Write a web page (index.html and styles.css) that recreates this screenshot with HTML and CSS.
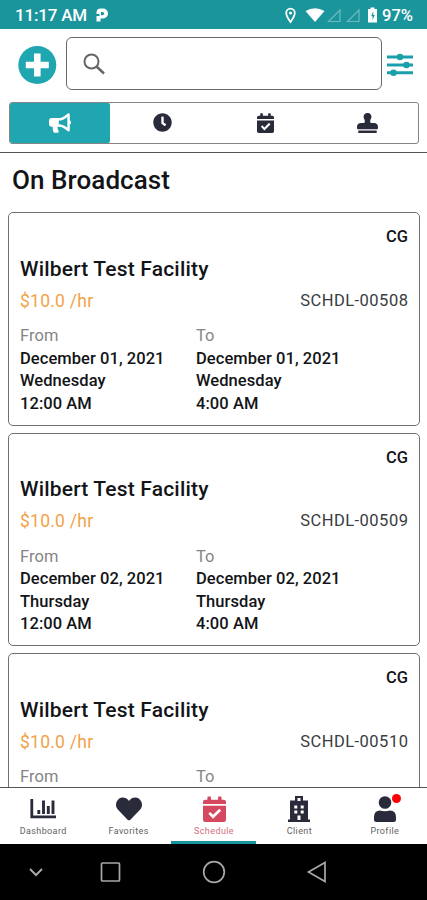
FILE: index.html
```
<!DOCTYPE html>
<html lang="en">
<head>
<meta charset="utf-8">
<title>Schedule</title>
<link rel="stylesheet" href="styles.css">
</head>
<body>
<div class="status">
  <span class="clock">11:17 AM</span>
  <svg class="parking" width="14" height="16" viewBox="0 0 14 16"><path fill="currentColor" fill-rule="evenodd" d="M1.500 7V5.500Q1.500 1.500 6 1.500H8A5 5 0 0 1 8 11.500H5.500V14.500H1.500V9H4.500V7zM6 5v3.200h1.600a1.600 1.600 0 0 0 0-3.200z"/></svg>
  <svg class="signals" width="95" height="20" viewBox="0 0 95 20">
    <path d="M6.500 17C4 13.500 2.200 11 2.200 8a4.300 4.300 0 0 1 8.600 0c0 3-1.800 5.500-4.300 9z" fill="none" stroke="#fff" stroke-width="1.800"/><circle cx="6.500" cy="8" r="1.500" fill="#fff"/>
    <path d="M21.500 6Q31 .5 40.500 6L31 17z" fill="#fff"/>
    <path d="M44.500 16.500H56V5zM63.500 16.500H75V5z" fill="none" stroke="#6fb9be" stroke-width="1.200"/>
    <path d="M86.500 2.500h4V4h2.500v13.500h-9V4h2.500z" fill="#fff"/><path d="M89.300 6.500v3.500h1.500l-2.200 5v-3.800h-1.500z" fill="#1b959c"/>
  </svg>
  <span class="percent">97%</span>
</div>
<header>
  <div class="toolbar">
    <svg class="add" width="40" height="40" viewBox="0 0 40 40"><circle cx="20.300" cy="21" r="19" fill="#1fa6b0"/><path d="M20.300 9.500v23M8.800 21h23" stroke="#fff" stroke-width="6.600"/></svg>
    <div class="search"><svg width="24" height="24" viewBox="0 0 24 24" fill="none" stroke="#666"><circle cx="8.500" cy="8.500" r="7" stroke-width="2"/><path d="M13.500 13.500l7.500 7" stroke-width="2.500"/></svg></div>
    <svg class="filters" width="26" height="24" viewBox="0 0 26 24"><path d="M0 4h26M0 12h26M0 19.700h26" stroke="#1ba0aa" stroke-width="3"/><g fill="#1ba0aa"><circle cx="13" cy="4" r="3.300"/><circle cx="19.500" cy="12" r="3.300"/><circle cx="6.500" cy="19.700" r="3.300"/></g></svg>
  </div>
  <nav class="tabs">
    <div class="tab active"><svg width="22" height="20" viewBox="0 0 576 512"><path fill="currentColor" d="M576 240c0-23.630-12.950-44.040-32-55.120V32.010C544 23.260 537.020 0 512 0c-7.120 0-14.190 2.380-19.980 7.020l-85.030 68.030C364.280 109.190 310.660 128 256 128H64c-35.350 0-64 28.650-64 64v96c0 35.350 28.650 64 64 64h33.700c-1.390 10.480-2.180 21.140-2.180 32 0 39.770 9.260 77.350 25.560 110.940 5.190 10.690 16.520 17.060 28.400 17.060h74.280c26.050 0 41.690-29.840 25.900-50.560-16.400-21.520-26.150-48.360-26.150-77.440 0-11.110 1.620-21.790 4.410-32H256c54.660 0 108.280 18.810 150.980 52.950l85.030 68.030a32.023 32.023 0 0 0 19.980 7.020c24.920 0 32-22.780 32-32V295.130C563.050 284.040 576 263.630 576 240zm-96 141.420l-33.050-26.440C392.950 311.780 325.120 288 256 288v-96c69.120 0 136.950-23.780 190.950-66.980L480 98.580v282.840z"/></svg></div>
    <div class="tab"><svg width="19" height="19" viewBox="0 0 512 512"><path fill="currentColor" d="M256,8C119,8,8,119,8,256S119,504,256,504,504,393,504,256,393,8,256,8Zm92.490,313h0l-20,25a16,16,0,0,1-22.490,2.500h0l-67-49.720a40,40,0,0,1-15-31.230V112a16,16,0,0,1,16-16h32a16,16,0,0,1,16,16V256l58,42.500A16,16,0,0,1,348.490,321Z"/></svg></div>
    <div class="tab"><svg width="17" height="20" viewBox="0 0 26 28" preserveAspectRatio="none"><path id="cal" fill="currentColor" fill-rule="evenodd" d="M5 1.500A1 1 0 0 1 6 .5h2a1 1 0 0 1 1 1V4h8V1.500a1 1 0 0 1 1-1h2a1 1 0 0 1 1 1V4h2.500A2.500 2.500 0 0 1 26 6.500V8.500H0V6.500A2.500 2.500 0 0 1 2.500 4H5zM0 10.500h26v15a2.500 2.500 0 0 1-2.500 2.500h-21A2.500 2.500 0 0 1 0 25.500zM6 19.200l5.300 5.300L20.500 16l-2-2.200-7.200 6.500-3.200-3.200z"/></svg></div>
    <div class="tab"><svg width="21" height="20" viewBox="0 0 512 512" preserveAspectRatio="none"><path fill="currentColor" d="M32 512h448v-64H32v64zm384-256h-66.560c-16.260 0-29.440-13.180-29.440-29.440v-9.460c0-27.370 8.880-53.410 21.460-77.720 9.110-17.610 12.900-38.390 9.050-60.420-6.770-38.780-38.470-70.700-77.260-77.450C212.620-9.040 160 37.330 160 96c0 14.160 3.120 27.540 8.690 39.580C182.020 164.430 192 194.700 192 226.490v.07c0 16.260-13.180 29.440-29.440 29.440H96c-53.020 0-96 42.980-96 96v32c0 17.670 14.330 32 32 32h448c17.670 0 32-14.330 32-32v-32c0-53.020-42.980-96-96-96z"/></svg></div>
  </nav>
</header>
<main>
  <h1>On Broadcast</h1>
  <article class="card">
    <div class="type">CG</div>
    <h2>Wilbert Test Facility</h2>
    <div class="meta"><span class="rate">$10.0 /hr</span><span class="code">SCHDL-00508</span></div>
    <div class="times">
      <div><p class="label">From</p><p class="date">December 01, 2021</p><p>Wednesday</p><p class="hour">12:00 AM</p></div>
      <div><p class="label">To</p><p class="date">December 01, 2021</p><p>Wednesday</p><p class="hour">4:00 AM</p></div>
    </div>
  </article>
  <article class="card">
    <div class="type">CG</div>
    <h2>Wilbert Test Facility</h2>
    <div class="meta"><span class="rate">$10.0 /hr</span><span class="code">SCHDL-00509</span></div>
    <div class="times">
      <div><p class="label">From</p><p class="date">December 02, 2021</p><p>Thursday</p><p class="hour">12:00 AM</p></div>
      <div><p class="label">To</p><p class="date">December 02, 2021</p><p>Thursday</p><p class="hour">4:00 AM</p></div>
    </div>
  </article>
  <article class="card">
    <div class="type">CG</div>
    <h2>Wilbert Test Facility</h2>
    <div class="meta"><span class="rate">$10.0 /hr</span><span class="code">SCHDL-00510</span></div>
    <div class="times">
      <div><p class="label">From</p></div>
      <div><p class="label">To</p></div>
    </div>
  </article>
</main>
<nav class="bottom">
  <div class="item"><svg width="26" height="26" viewBox="0 0 26 26"><path d="M1.800 3v17.800H26" fill="none" stroke="currentColor" stroke-width="2.800"/><path d="M8.800 18v-4M13.500 18V4.500M18.300 18v-8M23 18V4.500" stroke="currentColor" stroke-width="2.900"/></svg><span>Dashboard</span></div>
  <div class="item"><svg width="26" height="26" viewBox="0 0 512 512"><path fill="currentColor" d="M462.300 62.600C407.500 15.900 326 24.300 275.700 76.200L256 96.500l-19.700-20.300C186.100 24.300 104.500 15.900 49.700 62.600c-62.800 53.600-66.100 149.800-9.900 207.900l193.500 199.800c12.500 12.900 32.800 12.900 45.300 0l193.500-199.800c56.300-58.100 53-154.300-9.800-207.900z"/></svg><span>Favorites</span></div>
  <div class="item current"><svg width="23" height="26" viewBox="0 0 26 28" preserveAspectRatio="none"><use href="#cal"/></svg><span>Schedule</span></div>
  <div class="item"><svg width="22" height="26" viewBox="0 0 22 26"><path fill="currentColor" fill-rule="evenodd" d="M7 0h8v4.500h5v19h2V26H0v-2.500h2v-19h5zM9.500 2v3h3V2zM6.300 9.500v3h3v-3zM12.700 9.500v3h3v-3zM6.300 14.500v3h3v-3zM12.700 14.500v3h3v-3zM9.500 19.500v4.500h3v-4.500z"/></svg><span>Client</span></div>
  <div class="item"><div class="avatar"><svg width="24" height="26" viewBox="0 0 24 26" fill="currentColor"><circle cx="12" cy="6.500" r="6.300"/><path d="M1 23.500V21Q1 14.500 7 14.500q5 1.500 10 0 6 0 6 6.500v2.500Q23 26 20.500 26h-17Q1 26 1 23.500z"/></svg><i class="badge"></i></div><span>Profile</span></div>
</nav>
<div class="system">
  <svg width="427" height="56" viewBox="0 0 427 56" fill="none" stroke="#a8a8a8" stroke-width="1.700"><path d="M30 25l6 6 6-6" stroke-width="2"/><rect x="101.500" y="19" width="18" height="18" rx="1"/><circle cx="214" cy="28" r="10.300"/><path d="M308.500 28L325 18.500v19z"/></svg>
</div>
</body>
</html>
```
FILE: styles.css
```
* { box-sizing: border-box; }
body {
  margin: 0;
  width: 427px;
  height: 900px;
  display: flex;
  flex-direction: column;
  overflow: hidden;
  background: #fff;
  color: #121417;
  font-family: Roboto, "Liberation Sans", sans-serif;
}
h1, h2, p { margin: 0; font-weight: 500; }
svg { display: block; flex: none; }
.status {
  height: 29px;
  flex: none;
  display: flex;
  align-items: center;
  padding: 1px 13px 0 15px;
  background: #1b959c;
  color: #fff;
  font-size: 17px;
  font-weight: 500;
}
.clock { width: 80px; white-space: nowrap; letter-spacing: -.2px; }
.signals { margin-left: auto; margin-right: 3px; }
.percent { width: 32px; font-size: 16.5px; white-space: nowrap; }
header {
  height: 124px;
  flex: none;
  border-bottom: 1px solid #555;
}
.toolbar {
  display: flex;
  align-items: center;
  height: 53px;
  margin-top: 8px;
  padding: 0 13px 0 17px;
}
.search {
  width: 316px;
  height: 53px;
  margin: 0 5px 0 9px;
  padding: 15px 16px;
  border: 1px solid #686868;
  border-radius: 6px;
}
.filters { margin-top: 3px; }
.tabs {
  display: flex;
  height: 42px;
  margin: 12px 8px 0 9px;
  border: 1px solid #868686;
  border-radius: 3px;
  color: #292a3a;
}
.tab {
  flex: 1;
  display: flex;
  align-items: center;
  justify-content: center;
  padding: 0 0 1px 2px;
}
.tab.active {
  flex: 0 0 100px;
  padding-left: 0;
  background: #1fa6b0;
  color: #fff;
  border-radius: 2px;
}
main { height: 634px; flex: none; overflow: hidden; padding: 0 7px 0 8px; }
h1 {
  height: 59px;
  padding: 12px 0 0 4px;
  font-size: 26px;
  line-height: 30px;
  letter-spacing: .07px;
}
.card {
  height: 213.5px;
  margin-bottom: 7.2px;
  padding: 12px 11px 0;
  border: 1px solid #707070;
  border-radius: 5px;
}
.type { height: 30.5px; line-height: 24px; text-align: right; font-size: 16.5px; font-weight: 500; }
h2 { font-size: 21px; line-height: 26px; letter-spacing: .18px; }
.meta {
  display: flex;
  justify-content: space-between;
  margin-top: 6px;
  font-size: 16.5px;
  line-height: 26px;
}
.rate { color: #f0a348; font-size: 17.5px; letter-spacing: .25px; }
.code { color: #393c40; letter-spacing: .48px; margin-right: -.4px; }
.times {
  display: grid;
  grid-template-columns: 176px 1fr;
  margin-top: 11.5px;
  font-size: 16.5px;
  line-height: 22.5px;
}
.times p { letter-spacing: .06px; }
.times .label { color: #858585; font-weight: 400; }
.bottom {
  height: 57px;
  flex: none;
  display: flex;
  border-top: 1px solid #555;
  background: #fff;
  color: #292b3a;
}
.item {
  flex: 1;
  display: flex;
  flex-direction: column;
  align-items: center;
  padding: 8px 0 0 1px;
  font-size: 9px;
  line-height: 13px;
}
.item span { margin-top: 3px; color: #626262; letter-spacing: .4px; }
.item.current { color: #d5485f; border-bottom: 3px solid #16969c; }
.item.current span { color: #d56b80; }
.avatar { position: relative; }
.badge {
  position: absolute;
  right: -4px;
  top: -2px;
  width: 9px;
  height: 9px;
  border-radius: 50%;
  background: #fb0007;
}
.system { height: 56px; flex: none; background: #000; }
```
